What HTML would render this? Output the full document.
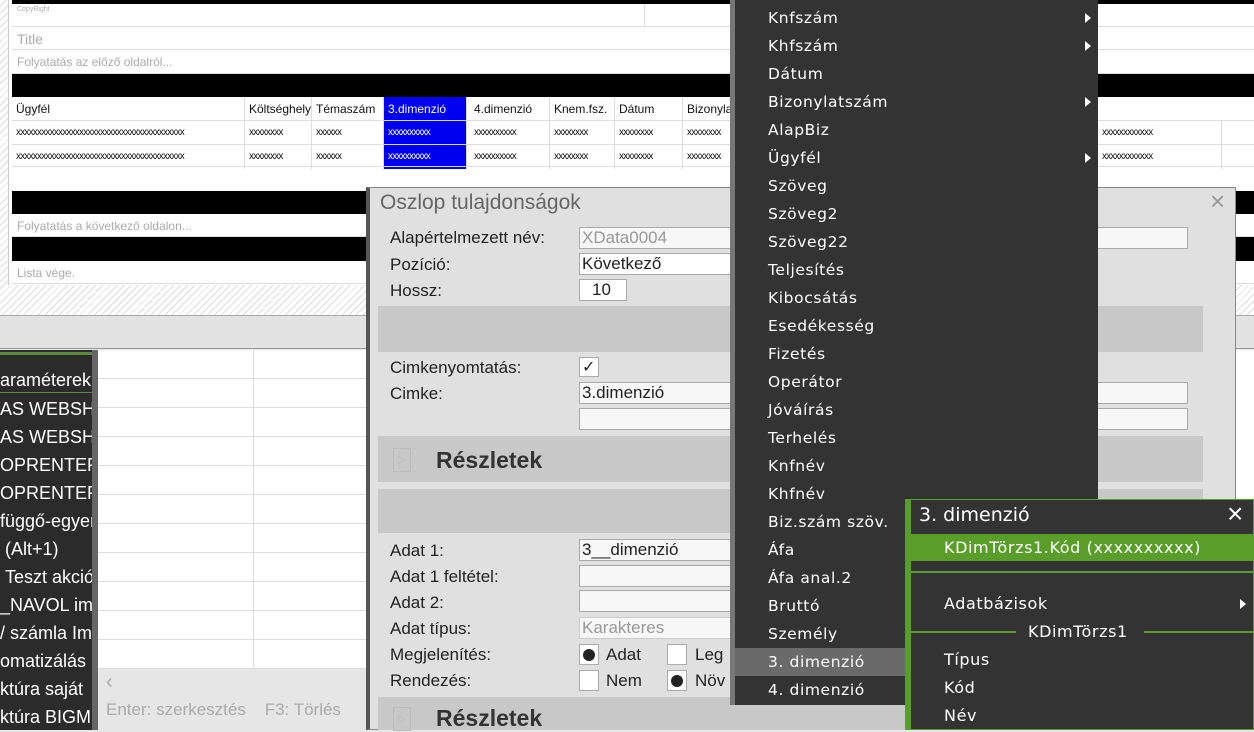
<!DOCTYPE html>
<html><head><meta charset="utf-8"><style>
*{margin:0;padding:0;box-sizing:border-box}
body{width:1254px;height:730px;overflow:hidden;position:relative;background:#e6e6e6;font-family:"Liberation Sans",Arial,sans-serif}
.a{position:absolute}
.hatch{background:repeating-linear-gradient(135deg,#fff 0 4px,#dcdcdc 4px 5px)}
.row{position:absolute;left:12px;right:0;border-bottom:1px solid #ddd;background:#fff;color:#aaa;font-size:12px;padding-left:5px}
.blk{position:absolute;left:12px;right:0;background:#000}
.c{position:absolute;font-size:12px;color:#111;border-right:1px solid #ddd;height:24px;line-height:24px;padding-left:4px;overflow:hidden;white-space:nowrap}
.x{font-size:10px;letter-spacing:-0.8px}
.lbl{position:absolute;left:390px;font-size:17px;color:#222}
.fld{position:absolute;left:579px;border:1px solid #aaa;background:#f7f7f7;height:22px;font-size:17px;color:#222;padding-left:2px;line-height:20px}
.band{position:absolute;left:378px;width:825px;background:#c8c8c8}
.mi{position:absolute;left:768px;color:#fff;font-family:"DejaVu Sans",sans-serif;font-size:15.5px;letter-spacing:0.6px}
.ar{position:absolute;left:1085px;width:0;height:0;border-left:6px solid #fff;border-top:5px solid transparent;border-bottom:5px solid transparent}
.li{position:absolute;left:0;color:#fff;font-size:18px;white-space:nowrap}
.si{position:absolute;left:944px;color:#fff;font-family:"DejaVu Sans",sans-serif;font-size:16px;letter-spacing:0.6px}
</style></head><body>
<div class="a hatch" style="left:0;top:0;width:1254px;height:315px"></div>
<div class="a" style="left:8px;top:0;width:1246px;height:285px;background:#fff;border-left:1px solid #ccc"></div>
<div class="blk" style="top:0;height:4px"></div>
<div class="row" style="top:4px;height:23px;font-size:7px;line-height:12px">CopyRight</div>
<div class="a" style="left:644px;top:4px;width:1px;height:23px;background:#ddd"></div>
<div class="row" style="top:27px;height:23px;line-height:24px;font-size:14px">Title</div>
<div class="row" style="top:50px;height:24px;line-height:24px">Folyatatás az előző oldalról...</div>
<div class="blk" style="top:74px;height:23px"></div>
<div class="a" style="left:12px;top:97px;width:1242px;height:70px;background:#fff">
<div class="c" style="left:0;top:0;width:233px">Ügyfél</div>
<div class="c" style="left:233px;top:0;width:67px">Költséghely</div>
<div class="c" style="left:300px;top:0;width:72px">Témaszám</div>
<div class="c" style="left:372px;top:0;width:83px;background:#0000f0;color:#fff">3.dimenzió</div>
<div class="c" style="left:458px;top:0;width:80px">4.dimenzió</div>
<div class="c" style="left:538px;top:0;width:65px">Knem.fsz.</div>
<div class="c" style="left:603px;top:0;width:68px">Dátum</div>
<div class="c" style="left:671px;top:0;width:60px">Bizonylat</div>
<div class="c x" style="left:0;top:24px;width:233px">xxxxxxxxxxxxxxxxxxxxxxxxxxxxxxxxxxxxxxxx</div>
<div class="c x" style="left:233px;top:24px;width:67px">xxxxxxxx</div>
<div class="c x" style="left:300px;top:24px;width:72px">xxxxxx</div>
<div class="c x" style="left:372px;top:24px;width:83px;background:#0000f0;color:#fff">xxxxxxxxxx</div>
<div class="c x" style="left:458px;top:24px;width:80px">xxxxxxxxxx</div>
<div class="c x" style="left:538px;top:24px;width:65px">xxxxxxxx</div>
<div class="c x" style="left:603px;top:24px;width:68px">xxxxxxxx</div>
<div class="c x" style="left:671px;top:24px;width:60px">xxxxxxxx</div>
<div class="c x" style="left:0;top:48px;width:233px">xxxxxxxxxxxxxxxxxxxxxxxxxxxxxxxxxxxxxxxx</div>
<div class="c x" style="left:233px;top:48px;width:67px">xxxxxxxx</div>
<div class="c x" style="left:300px;top:48px;width:72px">xxxxxx</div>
<div class="c x" style="left:372px;top:48px;width:83px;background:#0000f0;color:#fff">xxxxxxxxxx</div>
<div class="c x" style="left:458px;top:48px;width:80px">xxxxxxxxxx</div>
<div class="c x" style="left:538px;top:48px;width:65px">xxxxxxxx</div>
<div class="c x" style="left:603px;top:48px;width:68px">xxxxxxxx</div>
<div class="c x" style="left:671px;top:48px;width:60px">xxxxxxxx</div>
<div class="c x" style="left:1086px;top:24px;width:124px">xxxxxxxxxxxx</div>
<div class="c x" style="left:1086px;top:48px;width:124px">xxxxxxxxxxxx</div>
<div class="a" style="left:0;top:23px;width:1242px;height:1px;background:#ddd"></div>
<div class="a" style="left:0;top:47px;width:1242px;height:1px;background:#ddd"></div>
<div class="a" style="left:0;top:69px;width:1242px;height:1px;background:#ddd"></div>
</div>
<div class="blk" style="top:191px;height:23px"></div>
<div class="row" style="top:214px;height:23px;line-height:24px">Folyatatás a következő oldalon...</div>
<div class="blk" style="top:237px;height:24px"></div>
<div class="row" style="top:261px;height:23px;line-height:24px">Lista vége.</div>
<div class="a" style="left:0;top:315px;width:1254px;height:34px;background:#e2e2e2;border-top:1px solid #aaa;border-bottom:1px solid #999"></div>
<div class="a" style="left:1236px;top:350px;width:18px;height:380px;background:#fff"></div>
<div class="a" style="left:0;top:350px;width:92px;height:380px;background:#2b2b2b;overflow:hidden">
<div class="a" style="left:0;top:2px;width:92px;height:3px;background:#5a8a3a"></div>
<div class="li" style="top:20px">araméterek</div>
<div class="a" style="left:0;top:42px;width:92px;height:1px;background:#5a8a3a"></div>
<div class="li" style="top:49px">AS WEBSHOP</div>
<div class="li" style="top:77px">AS WEBSHOP</div>
<div class="li" style="top:105px">OPRENTER</div>
<div class="li" style="top:133px">OPRENTER</div>
<div class="li" style="top:161px">függő-egyenl</div>
<div class="li" style="top:189px">&nbsp;(Alt+1)</div>
<div class="li" style="top:217px">&nbsp;Teszt akció</div>
<div class="li" style="top:245px">_NAVOL im</div>
<div class="li" style="top:273px">/ számla Im</div>
<div class="li" style="top:301px">omatizálás</div>
<div class="li" style="top:329px">ktúra saját</div>
<div class="li" style="top:357px">ktúra BIGM</div>
</div>
<div class="a" style="left:92px;top:350px;width:6px;height:380px;background:#666"></div>
<div class="a" style="left:98px;top:350px;width:270px;height:319px;background:#fff;background-image:repeating-linear-gradient(180deg,transparent 0 28px,#ddd 28px 29px)"></div>
<div class="a" style="left:253px;top:350px;width:1px;height:319px;background:#ddd"></div>
<div class="a" style="left:98px;top:669px;width:270px;height:61px;background:#e6e6e6;color:#aaa;font-size:17px">
<div class="a" style="left:8px;top:2px;font-size:20px">‹</div>
<div class="a" style="left:8px;top:31px;white-space:nowrap">Enter: szerkesztés&nbsp;&nbsp;&nbsp; F3: Törlés</div></div>
<div class="a" style="left:366px;top:187px;width:870px;height:543px;background:#e0e0e0;border:1px solid #888;border-left:4px solid #555"></div>
<div class="a" style="left:380px;top:191px;font-size:21px;color:#666">Oszlop tulajdonságok</div>
<div class="a" style="left:1210px;top:186px;font-size:26px;color:#999">×</div>
<div class="lbl" style="top:228px">Alapértelmezett név:</div>
<div class="fld" style="top:227px;width:609px;color:#999">XData0004</div>
<div class="lbl" style="top:255px">Pozíció:</div>
<div class="fld" style="top:253px;width:160px;background:#fff">Következő</div>
<div class="lbl" style="top:281px">Hossz:</div>
<div class="fld" style="top:279px;width:48px;background:#fff;padding-left:12px">10</div>
<div class="band" style="top:306px;height:46px"></div>
<div class="lbl" style="top:358px">Cimkenyomtatás:</div>
<div class="fld" style="top:357px;width:20px;height:20px;background:#fff;font-size:16px">✓</div>
<div class="lbl" style="top:384px">Cimke:</div>
<div class="fld" style="top:382px;width:609px">3.dimenzió</div>
<div class="fld" style="top:408px;width:609px"></div>
<div class="band" style="top:436px;height:46px"></div>
<div class="a" style="left:393px;top:448px;width:18px;height:24px;border:1px solid #bbb;color:#bbb;font-size:11px;line-height:22px;text-align:center">▷</div>
<div class="a" style="left:436px;top:447px;font-size:23px;font-weight:bold;color:#333">Részletek</div>
<div class="band" style="top:489px;height:44px"></div>
<div class="lbl" style="top:541px">Adat 1:</div>
<div class="fld" style="top:539px;width:160px">3__dimenzió</div>
<div class="lbl" style="top:567px">Adat 1 feltétel:</div>
<div class="fld" style="top:565px;width:160px"></div>
<div class="lbl" style="top:593px">Adat 2:</div>
<div class="fld" style="top:590px;width:160px"></div>
<div class="lbl" style="top:619px">Adat típus:</div>
<div class="fld" style="top:617px;width:160px;color:#999;border-color:#ccc">Karakteres</div>
<div class="lbl" style="top:645px">Megjelenítés:</div>
<div class="fld" style="top:644px;width:20px;height:21px;background:#fff"><div class="a" style="left:3px;top:4px;width:12px;height:12px;border-radius:50%;background:#222"></div></div>
<div class="a" style="left:606px;top:645px;font-size:17px;color:#222">Adat</div>
<div class="fld" style="top:644px;left:667px;width:20px;height:21px;background:#fff"></div>
<div class="a" style="left:695px;top:645px;font-size:17px;color:#222">Leg</div>
<div class="lbl" style="top:671px">Rendezés:</div>
<div class="fld" style="top:670px;width:20px;height:21px;background:#fff"></div>
<div class="a" style="left:606px;top:671px;font-size:17px;color:#222">Nem</div>
<div class="fld" style="top:670px;left:667px;width:20px;height:21px;background:#fff"><div class="a" style="left:3px;top:4px;width:12px;height:12px;border-radius:50%;background:#222"></div></div>
<div class="a" style="left:695px;top:671px;font-size:17px;color:#222">Növ</div>
<div class="band" style="top:697px;height:33px"></div>
<div class="a" style="left:393px;top:707px;width:18px;height:24px;border:1px solid #bbb;color:#bbb;font-size:11px;line-height:22px;text-align:center">▷</div>
<div class="a" style="left:436px;top:705px;font-size:23px;font-weight:bold;color:#333">Részletek</div>
<div class="a" style="left:730px;top:0;width:5px;height:705px;background:#777"></div>
<div class="a" style="left:735px;top:0;width:363px;height:705px;background:#333"></div>
<div class="a" style="left:735px;top:648px;width:170px;height:28px;background:#6a6a6a"></div>
<div class="mi" style="top:9px">Knfszám</div><div class="ar" style="top:13px"></div>
<div class="mi" style="top:37px">Khfszám</div><div class="ar" style="top:41px"></div>
<div class="mi" style="top:65px">Dátum</div>
<div class="mi" style="top:93px">Bizonylatszám</div><div class="ar" style="top:97px"></div>
<div class="mi" style="top:121px">AlapBiz</div>
<div class="mi" style="top:149px">Ügyfél</div><div class="ar" style="top:153px"></div>
<div class="mi" style="top:177px">Szöveg</div>
<div class="mi" style="top:205px">Szöveg2</div>
<div class="mi" style="top:233px">Szöveg22</div>
<div class="mi" style="top:261px">Teljesítés</div>
<div class="mi" style="top:289px">Kibocsátás</div>
<div class="mi" style="top:317px">Esedékesség</div>
<div class="mi" style="top:345px">Fizetés</div>
<div class="mi" style="top:373px">Operátor</div>
<div class="mi" style="top:401px">Jóváírás</div>
<div class="mi" style="top:429px">Terhelés</div>
<div class="mi" style="top:457px">Knfnév</div>
<div class="mi" style="top:485px">Khfnév</div>
<div class="mi" style="top:513px">Biz.szám szöv.</div>
<div class="mi" style="top:541px">Áfa</div>
<div class="mi" style="top:569px">Áfa anal.2</div>
<div class="mi" style="top:597px">Bruttó</div>
<div class="mi" style="top:625px">Személy</div>
<div class="mi" style="top:653px">3. dimenzió</div>
<div class="mi" style="top:681px">4. dimenzió</div>
<div class="a" style="left:905px;top:499px;width:349px;height:231px;background:#333;border:1px solid #5a9e2a;border-left:6px solid #5a9e2a"></div>
<div class="a" style="left:919px;top:504px;color:#fff;font-family:'DejaVu Sans',sans-serif;font-size:19px">3. dimenzió</div>
<div class="a" style="left:1227px;top:498px;color:#fff;font-size:28px">×</div>
<div class="a" style="left:911px;top:534px;width:343px;height:27px;background:#5a9e2a"></div>
<div class="si" style="top:538px">KDimTörzs1.Kód (xxxxxxxxxx)</div>
<div class="a" style="left:911px;top:571px;width:343px;height:2px;background:#5a9e2a"></div>
<div class="si" style="top:594px">Adatbázisok</div>
<div class="ar" style="left:1240px;top:599px"></div>
<div class="a" style="left:911px;top:631px;width:105px;height:2px;background:#5a9e2a"></div>
<div class="a" style="left:1144px;top:631px;width:110px;height:2px;background:#5a9e2a"></div>
<div class="si" style="left:1028px;top:622px">KDimTörzs1</div>
<div class="si" style="top:650px">Típus</div>
<div class="si" style="top:678px">Kód</div>
<div class="si" style="top:706px">Név</div>
</body></html>
